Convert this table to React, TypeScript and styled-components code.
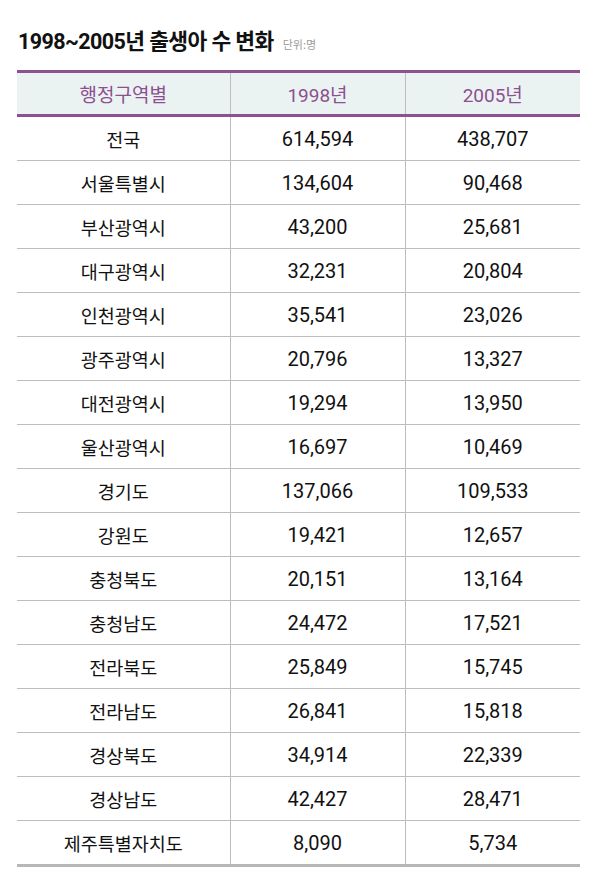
import styled, { createGlobalStyle } from "styled-components";
import { FC } from "react";

const GlobalStyle = createGlobalStyle`
  html, body {
    margin: 0;
    padding: 0;
    background: #fff;
  }
  body {
    font-family: "Roboto", "Noto Sans CJK KR", sans-serif;
  }
`;

const StyledPage = styled.div`
  width: 595px;
  height: 884px;
  padding: 24px 15px 0 17px;
  box-sizing: border-box;
`;

const StyledTitleRow = styled.div`
  display: flex;
  flex-flow: row nowrap;
  align-items: baseline;
  gap: 9px;
  height: 46px;
  padding-left: 1px;
`;

const StyledTitle = styled.h1`
  margin: 0;
  font-family: "Roboto", "Noto Sans CJK KR", sans-serif;
  font-size: 21.5px;
  font-weight: 700;
  letter-spacing: -0.6px;
  color: #111;
`;

const StyledUnit = styled.span`
  font-family: "Noto Sans CJK KR", sans-serif;
  font-size: 11px;
  color: #9a9a9a;
`;

const StyledTable = styled.table`
  width: 563px;
  border-collapse: collapse;
  table-layout: fixed;
`;

interface CellProps {
  $first?: boolean;
}

const StyledHeadCell = styled.th<CellProps>`
  height: 41px;
  padding: 0;
  background-color: #ebf3f2;
  border-top: 3px solid #8d5192;
  border-bottom: 3px solid #8d5192;
  border-left: ${({ $first }) => ($first ? "none" : "1.5px solid #bdbdbd")};
  font-family: "Roboto", "Noto Sans CJK KR", sans-serif;
  font-size: 19px;
  font-weight: 400;
  color: #8d4f91;
  text-align: center;
`;

interface RowProps {
  $last?: boolean;
}

const StyledRow = styled.tr<RowProps>`
  border-bottom: ${({ $last }) =>
    $last ? "3px solid #b7b7b7" : "1.5px solid #bdbdbd"};
`;

const StyledCell = styled.td<CellProps>`
  height: 43px;
  padding: 0;
  border-left: ${({ $first }) => ($first ? "none" : "1.5px solid #bdbdbd")};
  font-family: "Roboto", "Noto Sans CJK KR", sans-serif;
  font-size: ${({ $first }) => ($first ? "18.5px" : "20px")};
  color: #111;
  text-align: center;
`;

const rows: [string, string, string][] = [
  ["전국", "614,594", "438,707"],
  ["서울특별시", "134,604", "90,468"],
  ["부산광역시", "43,200", "25,681"],
  ["대구광역시", "32,231", "20,804"],
  ["인천광역시", "35,541", "23,026"],
  ["광주광역시", "20,796", "13,327"],
  ["대전광역시", "19,294", "13,950"],
  ["울산광역시", "16,697", "10,469"],
  ["경기도", "137,066", "109,533"],
  ["강원도", "19,421", "12,657"],
  ["충청북도", "20,151", "13,164"],
  ["충청남도", "24,472", "17,521"],
  ["전라북도", "25,849", "15,745"],
  ["전라남도", "26,841", "15,818"],
  ["경상북도", "34,914", "22,339"],
  ["경상남도", "42,427", "28,471"],
  ["제주특별자치도", "8,090", "5,734"],
];

const App: FC = () => {
  return (
    <StyledPage>
      <GlobalStyle />
      <StyledTitleRow>
        <StyledTitle>1998~2005년 출생아 수 변화</StyledTitle>
        <StyledUnit>단위:명</StyledUnit>
      </StyledTitleRow>

      <StyledTable>
        <colgroup>
          <col style={{ width: 213 }} />
          <col style={{ width: 175 }} />
          <col style={{ width: 175 }} />
        </colgroup>
        <thead>
          <tr>
            <StyledHeadCell $first>행정구역별</StyledHeadCell>
            <StyledHeadCell>1998년</StyledHeadCell>
            <StyledHeadCell>2005년</StyledHeadCell>
          </tr>
        </thead>
        <tbody>
          {rows.map(([region, y1998, y2005], i) => (
            <StyledRow key={region} $last={i === rows.length - 1}>
              <StyledCell $first>{region}</StyledCell>
              <StyledCell>{y1998}</StyledCell>
              <StyledCell>{y2005}</StyledCell>
            </StyledRow>
          ))}
        </tbody>
      </StyledTable>
    </StyledPage>
  );
};

export default App;
